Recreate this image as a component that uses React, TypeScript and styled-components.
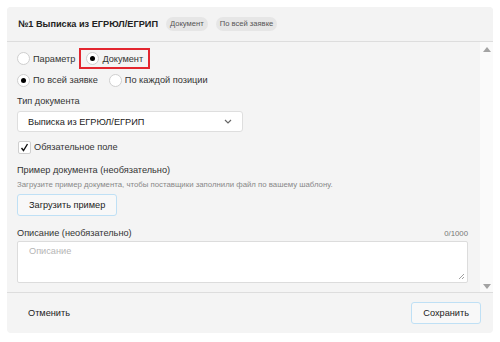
import React from "react";
import styled, { createGlobalStyle } from "styled-components";

const Global = createGlobalStyle`
  html, body { margin: 0; padding: 0; background: #ffffff; }
  body { font-family: "Liberation Sans", Arial, sans-serif; color: #333; }
  * { box-sizing: border-box; }
`;

const FS = "9.2px";

const Page = styled.div`
  width: 500px;
  height: 342px;
  padding: 7px 7px 9px 7px;
`;

const Card = styled.div`
  width: 486px;
  height: 326px;
  background: #f4f4f4;
  border-radius: 4px;
  display: flex;
  flex-direction: column;
  overflow: hidden;
`;

const Header = styled.div`
  height: 35px;
  flex: none;
  display: flex;
  align-items: center;
  gap: 8px;
  padding: 0 11px;
  background: #f3f3f3;
  border-bottom: 1px solid #dddddd;
`;

const Title = styled.div`
  font-size: ${FS};
  font-weight: bold;
  color: #222;
`;

const Badge = styled.span`
  font-size: 7.6px;
  color: #555;
  background: #e6e6e6;
  border-radius: 7px;
  padding: 2px 4px;
  line-height: 10px;
`;

const Middle = styled.div`
  height: 251px;
  flex: none;
  display: flex;
  border-bottom: 1px solid #dddddd;
`;

const Content = styled.div`
  flex: 1;
  padding: 6px 12px 0 10px;
  display: flex;
  flex-direction: column;
`;

const ScrollBar = styled.div`
  width: 13px;
  flex: none;
  background: #fafafa;
  display: flex;
  flex-direction: column;
  justify-content: space-between;
  align-items: center;
  padding: 5px 0 3px;
`;

const Row = styled.div<{ $h: number }>`
  height: ${(p) => p.$h}px;
  display: flex;
  align-items: center;
  font-size: ${FS};
`;

const RadioOpt = styled.label<{ $boxed?: boolean; $gap?: number }>`
  display: flex;
  align-items: center;
  gap: 3px;
  height: 21px;
  padding: 0 ${(p) => (p.$boxed ? "5px" : "0")};
  margin-right: ${(p) => p.$gap ?? 0}px;
  border: ${(p) => (p.$boxed ? "2px solid #e3262f" : "none")};
  font-size: ${FS};
  color: #333;
`;

const Circle = styled.span<{ $on?: boolean }>`
  width: 13px;
  height: 13px;
  border-radius: 50%;
  background: #fff;
  border: 1px solid #cfcfcf;
  display: flex;
  align-items: center;
  justify-content: center;
  &::after {
    content: "";
    width: 5px;
    height: 5px;
    border-radius: 50%;
    background: ${(p) => (p.$on ? "#000" : "transparent")};
  }
`;

const Label = styled.div<{ $h: number; $mt?: number }>`
  height: ${(p) => p.$h}px;
  margin-top: ${(p) => p.$mt ?? 0}px;
  display: flex;
  align-items: center;
  font-size: ${FS};
  color: #333;
`;

const LabelRow = styled(Label)`
  justify-content: space-between;
`;

const Counter = styled.span`
  font-size: 7.8px;
  color: #777;
`;

const Hint = styled.div`
  height: 12px;
  display: flex;
  align-items: center;
  font-size: 7.8px;
  color: #888;
`;

const Select = styled.div`
  width: 226px;
  height: 21px;
  flex: none;
  background: #fff;
  border: 1px solid #dedede;
  border-radius: 3px;
  display: flex;
  align-items: center;
  justify-content: space-between;
  padding: 0 10px 0 10px;
  font-size: ${FS};
  color: #222;
`;

const Check = styled.span`
  width: 13px;
  height: 13px;
  background: #fff;
  border: 1px solid #cfcfcf;
  border-radius: 2px;
  display: flex;
  align-items: center;
  justify-content: center;
  margin-left: 1px;
  margin-right: 3px;
`;

const Button = styled.button<{ $mt?: number }>`
  height: 22px;
  flex: none;
  margin-top: ${(p) => p.$mt ?? 0}px;
  padding: 0 11px;
  background: #f8f8f8;
  border: 1px solid #bfe0f5;
  border-radius: 3px;
  font-family: "Liberation Sans", Arial, sans-serif;
  font-size: ${FS};
  color: #222;
  width: fit-content;
`;

const TextArea = styled.div`
  width: 451px;
  height: 42px;
  flex: none;
  background: #fff;
  border: 1px solid #dcdcdc;
  border-radius: 2px;
  position: relative;
  padding: 4px 11px;
  font-size: ${FS};
  color: #b5b5b5;
`;

const Grip = styled.svg`
  position: absolute;
  right: 2px;
  bottom: 2px;
`;

const Footer = styled.div`
  flex: 1;
  display: flex;
  align-items: center;
  justify-content: space-between;
  padding: 0 12px 0 21px;
  font-size: ${FS};
`;

const Cancel = styled.span`
  color: #222;
`;

export default function App() {
  return (
    <>
      <Global />
      <Page>
        <Card>
          <Header>
            <Title>№1 Выписка из ЕГРЮЛ/ЕГРИП</Title>
            <Badge>Документ</Badge>
            <Badge>По всей заявке</Badge>
          </Header>
          <Middle>
            <Content>
              <Row $h={21}>
                <RadioOpt $gap={4}>
                  <Circle />
                  Параметр
                </RadioOpt>
                <RadioOpt $boxed>
                  <Circle $on />
                  Документ
                </RadioOpt>
              </Row>
              <Row $h={22}>
                <RadioOpt $gap={11}>
                  <Circle $on />
                  По всей заявке
                </RadioOpt>
                <RadioOpt>
                  <Circle />
                  По каждой позиции
                </RadioOpt>
              </Row>
              <Label $h={20}>Тип документа</Label>
              <Select>
                <span>Выписка из ЕГРЮЛ/ЕГРИП</span>
                <svg width="8" height="5" viewBox="0 0 8 5">
                  <path d="M1 1 L4 4 L7 1" stroke="#666" strokeWidth="1.2" fill="none" />
                </svg>
              </Select>
              <Row $h={30}>
                <Check>
                  <svg width="9" height="9" viewBox="0 0 9 9">
                    <path d="M1.5 5 L3.5 7.5 L7.5 1" stroke="#111" strokeWidth="1.4" fill="none" />
                  </svg>
                </Check>
                Обязательное поле
              </Row>
              <Label $h={16}>Пример документа (необязательно)</Label>
              <Hint>Загрузите пример документа, чтобы поставщики заполнили файл по вашему шаблону.</Hint>
              <Button $mt={4}>Загрузить пример</Button>
              <LabelRow $h={16} $mt={9}>
                <span>Описание (необязательно)</span>
                <Counter>0/1000</Counter>
              </LabelRow>
              <TextArea>
                Описание
                <Grip width="7" height="7" viewBox="0 0 7 7">
                  <path d="M6 1 L1 6 M6 4 L4 6" stroke="#888" strokeWidth="0.8" />
                </Grip>
              </TextArea>
            </Content>
            <ScrollBar>
              <svg width="8" height="5" viewBox="0 0 8 5">
                <path d="M0 5 L4 0 L8 5 Z" fill="#a3a3a3" />
              </svg>
              <svg width="8" height="5" viewBox="0 0 8 5">
                <path d="M0 0 L8 0 L4 5 Z" fill="#a3a3a3" />
              </svg>
            </ScrollBar>
          </Middle>
          <Footer>
            <Cancel>Отменить</Cancel>
            <Button>Сохранить</Button>
          </Footer>
        </Card>
      </Page>
    </>
  );
}
